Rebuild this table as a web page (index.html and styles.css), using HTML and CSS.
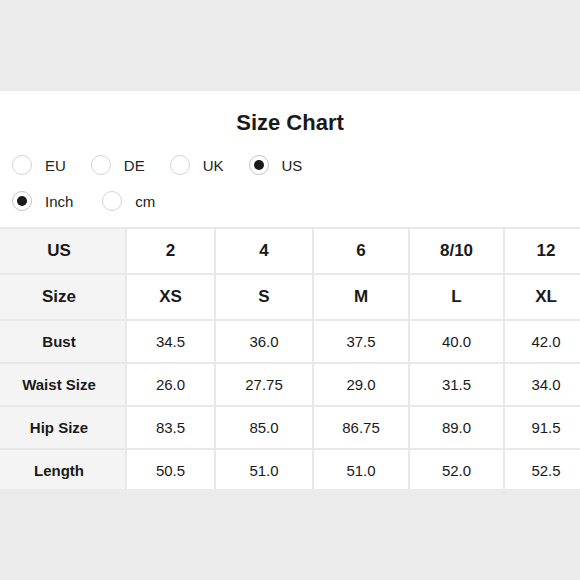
FILE: index.html
```html
<!DOCTYPE html>
<html>
<head>
<meta charset="utf-8">
<link rel="stylesheet" href="styles.css">
</head>
<body>
<div class="panel">
  <h1 class="title">Size Chart</h1>
  <div class="options">
    <div class="radio-row">
      <label class="opt"><span class="radio"></span><span class="lbl">EU</span></label>
      <label class="opt"><span class="radio"></span><span class="lbl">DE</span></label>
      <label class="opt"><span class="radio"></span><span class="lbl">UK</span></label>
      <label class="opt"><span class="radio checked"></span><span class="lbl">US</span></label>
    </div>
    <div class="radio-row wide">
      <label class="opt"><span class="radio checked"></span><span class="lbl">Inch</span></label>
      <label class="opt"><span class="radio"></span><span class="lbl">cm</span></label>
    </div>
  </div>
  <div class="table-wrap">
    <table class="chart">
      <colgroup>
        <col class="c1"><col class="c2"><col class="c3"><col class="c4"><col class="c5"><col class="c6">
      </colgroup>
      <tr class="head"><th>US</th><td>2</td><td>4</td><td>6</td><td>8/10</td><td>12</td></tr>
      <tr class="head"><th>Size</th><td>XS</td><td>S</td><td>M</td><td>L</td><td>XL</td></tr>
      <tr><th>Bust</th><td>34.5</td><td>36.0</td><td>37.5</td><td>40.0</td><td>42.0</td></tr>
      <tr><th>Waist Size</th><td>26.0</td><td>27.75</td><td>29.0</td><td>31.5</td><td>34.0</td></tr>
      <tr><th>Hip Size</th><td>83.5</td><td>85.0</td><td>86.75</td><td>89.0</td><td>91.5</td></tr>
      <tr><th>Length</th><td>50.5</td><td>51.0</td><td>51.0</td><td>52.0</td><td>52.5</td></tr>
    </table>
  </div>
</div>
</body>
</html>
```

FILE: styles.css
```css
html, body {
  margin: 0;
  padding: 0;
  background: #ebebeb;
  font-family: "Liberation Sans", Arial, sans-serif;
  color: #1a1a1a;
}
body {
  padding-top: 91px;
  overflow: hidden;
}
.panel {
  background: #fff;
  height: 398px;
  overflow: hidden;
}
.title {
  margin: 0;
  padding-top: 19px;
  font-size: 22px;
  line-height: 26px;
  font-weight: bold;
  text-align: center;
  color: #1a1a1a;
}
.options {
  display: flex;
  flex-direction: column;
  gap: 16px;
  padding: 19px 0 0 12px;
}
.radio-row {
  display: flex;
  gap: 25px;
  height: 20px;
  align-items: center;
}
.radio-row.wide {
  gap: 29px;
}
.opt {
  display: flex;
  align-items: center;
  gap: 13px;
  font-size: 15px;
  color: #222;
}
.radio {
  width: 20px;
  height: 20px;
  box-sizing: border-box;
  border: 1px solid #d4d4d4;
  border-radius: 50%;
  display: flex;
  align-items: center;
  justify-content: center;
  background: #fff;
}
.radio.checked {
  border-color: #c4c4c4;
}
.radio.checked::after {
  content: "";
  width: 10px;
  height: 10px;
  border-radius: 50%;
  background: #1a1a1a;
}
.table-wrap {
  display: flex;
  justify-content: center;
  margin-top: 16px;
}
.chart {
  flex: none;
  width: 596px;
  table-layout: fixed;
  border-collapse: collapse;
  font-size: 15px;
  color: #1a1a1a;
}
.c1 { width: 134px; }
.c2 { width: 89px; }
.c3 { width: 98px; }
.c4 { width: 96px; }
.c5 { width: 95px; }
.c6 { width: 84px; }
.chart th, .chart td {
  border: 2px solid #e8e8e8;
  text-align: center;
  padding: 0;
  height: 41px;
}
.chart th {
  background: #f4f4f4;
  font-weight: bold;
}
.chart tr.head th, .chart tr.head td {
  height: 44px;
  font-size: 17px;
  font-weight: bold;
}
```
